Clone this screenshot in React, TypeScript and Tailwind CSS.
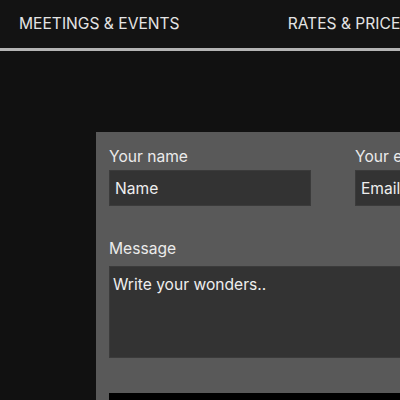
import { useState } from 'react';

const navItems = ['Meetings & Events', 'Rates & Prices', 'Contact'];

const ContactPage = () => {
  const [name, setName] = useState('');
  const [email, setEmail] = useState('');
  const [message, setMessage] = useState('');

  return (
    <div className="min-h-screen w-full overflow-hidden bg-[#111111] font-['Inter',sans-serif] text-[#e6e6e6]">
      {/* Top navigation */}
      <nav className="flex h-[51px] items-center gap-[108px] whitespace-nowrap border-b-[3px] border-[#b4b4b4] bg-[#131313] px-[19px]">
        {navItems.map((item) => (
          <a key={item} href="#" className="text-[15.6px] uppercase leading-6 text-[#e4e4e4]">
            {item}
          </a>
        ))}
      </nav>

      {/* Contact form */}
      <div className="pl-[96px] pt-[81px]">
        <form className="w-[474px] bg-[#595959] px-[13px] pt-[13px] pb-[40px]">
          <div className="flex gap-[44px]">
            <label className="flex w-[202px] flex-col gap-px">
              <span className="text-[15.6px] leading-6 text-[#ebebeb]">Your name</span>
              <input
                value={name}
                onChange={(e) => setName(e.target.value)}
                placeholder="Name"
                className="h-[36px] w-full border border-[#3b3b3b] bg-[#333333] px-[5px] text-[15.6px] text-[#eeeeee] outline-none placeholder:text-[#eeeeee]"
              />
            </label>
            <label className="flex w-[202px] flex-col gap-px">
              <span className="text-[15.6px] leading-6 text-[#ebebeb]">Your email</span>
              <input
                value={email}
                onChange={(e) => setEmail(e.target.value)}
                placeholder="Email"
                className="h-[36px] w-full border border-[#3b3b3b] bg-[#333333] px-[5px] text-[15.6px] text-[#eeeeee] outline-none placeholder:text-[#eeeeee]"
              />
            </label>
          </div>

          <label className="mt-[31px] flex flex-col gap-[5px]">
            <span className="text-[15.6px] leading-6 text-[#ebebeb]">Message</span>
            <textarea
              value={message}
              onChange={(e) => setMessage(e.target.value)}
              placeholder="Write your wonders.."
              className="h-[92px] w-full resize-none border border-[#3b3b3b] bg-[#333333] px-[3px] pt-[6px] text-[15.6px] leading-6 text-[#eeeeee] outline-none placeholder:text-[#eeeeee]"
            />
          </label>

          <button type="submit" className="mt-[35px] h-[44px] w-full bg-black text-[15.6px] uppercase text-white">
            Send
          </button>
        </form>
      </div>
    </div>
  );
};

export default ContactPage;
